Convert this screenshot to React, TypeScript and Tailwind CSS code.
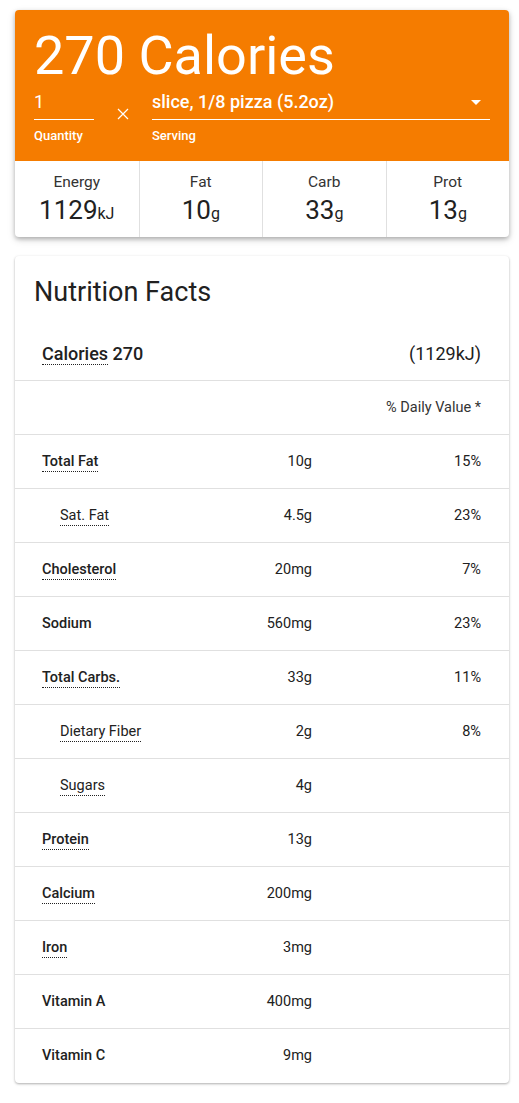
const font = { fontFamily: 'Roboto, "Liberation Sans", sans-serif' }

type Row = { name: string; amount: string; pct?: string; indent?: boolean; dotted?: boolean }

const rows: Row[] = [
  { name: 'Total Fat', amount: '10g', pct: '15%', dotted: true },
  { name: 'Sat. Fat', amount: '4.5g', pct: '23%', indent: true, dotted: true },
  { name: 'Cholesterol', amount: '20mg', pct: '7%', dotted: true },
  { name: 'Sodium', amount: '560mg', pct: '23%' },
  { name: 'Total Carbs.', amount: '33g', pct: '11%', dotted: true },
  { name: 'Dietary Fiber', amount: '2g', pct: '8%', indent: true, dotted: true },
  { name: 'Sugars', amount: '4g', indent: true, dotted: true },
  { name: 'Protein', amount: '13g', dotted: true },
  { name: 'Calcium', amount: '200mg', dotted: true },
  { name: 'Iron', amount: '3mg', dotted: true },
  { name: 'Vitamin A', amount: '400mg' },
  { name: 'Vitamin C', amount: '9mg' },
]

const stats = [
  { label: 'Energy', value: '1129', unit: 'kJ' },
  { label: 'Fat', value: '10', unit: 'g' },
  { label: 'Carb', value: '33', unit: 'g' },
  { label: 'Prot', value: '13', unit: 'g' },
]

function Summary() {
  return (
    <div className="rounded-[4px] overflow-hidden bg-white shadow-[0_2px_4px_rgba(0,0,0,0.25),0_3px_8px_rgba(0,0,0,0.12)]">
      <div className="bg-[#f57c00] text-white px-[19px] pt-[14px] pb-[17px]">
        <div className="text-[54px] leading-[64px]">270 Calories</div>
        <div className="flex items-start mt-[4px]">
          <div className="w-[60px]">
            <div className="h-[28px] text-[18px] leading-[20px] border-b border-white">1</div>
            <div className="text-[13px] font-medium leading-[16px] mt-[8px]">Quantity</div>
          </div>
          <div className="w-[58px] flex justify-center pt-[16px]">
            <svg width="12" height="12" viewBox="0 0 12 12" stroke="white" strokeWidth="1.2">
              <path d="M1 1L11 11M11 1L1 11" />
            </svg>
          </div>
          <div className="flex-1">
            <div className="h-[28px] flex items-start justify-between border-b border-white">
              <span className="text-[18px] font-medium leading-[20px]">slice, 1/8 pizza (5.2oz)</span>
              <svg width="10" height="5" viewBox="0 0 10 5" className="mr-[9px] mt-[8px]">
                <path d="M0 0H10L5 5Z" fill="white" />
              </svg>
            </div>
            <div className="text-[13px] font-medium leading-[16px] mt-[8px]">Serving</div>
          </div>
        </div>
      </div>
      <div className="grid grid-cols-4 h-[76px]">
        {stats.map((s, i) => (
          <div
            key={s.label}
            className={`flex flex-col items-center pt-[11px] ${i > 0 ? 'border-l border-[#e0e0e0]' : ''}`}
          >
            <div className="text-[15.5px] leading-[20px] text-[#333]">{s.label}</div>
            <div className="text-[#212121] leading-[32px] mt-[2px]">
              <span className="text-[26px]">{s.value}</span>
              <span className="text-[16px]">{s.unit}</span>
            </div>
          </div>
        ))}
      </div>
    </div>
  )
}

function Facts() {
  return (
    <div className="rounded-[4px] overflow-hidden bg-white shadow-[0_1px_3px_rgba(0,0,0,0.22),0_1px_2px_rgba(0,0,0,0.12)] mt-[19px] text-[#212121]">
      <div className="h-[71px] flex items-center px-[19px]">
        <div className="text-[27px] leading-[32px]">Nutrition Facts</div>
      </div>
      <div className="h-[54px] flex items-center justify-between pl-[27px] pr-[28px] border-b border-[#e0e0e0]">
        <div className="text-[18px] font-medium">
          <span className="border-b border-dotted border-[#212121] leading-[21px] inline-block">Calories</span> 270
        </div>
        <div className="text-[18px]">(1129kJ)</div>
      </div>
      <div className="h-[54px] flex items-center justify-end pl-[27px] pr-[28px] border-b border-[#e0e0e0]">
        <span className="text-[14.5px] text-[#333]">% Daily Value *</span>
      </div>
      {rows.map((r, i) => (
        <div
          key={r.name}
          className={`h-[54px] flex items-center pl-[27px] pr-[28px] text-[14.5px] ${i < rows.length - 1 ? 'border-b border-[#e0e0e0]' : ''}`}
        >
          <div className={`flex-1 ${r.indent ? 'pl-[18px]' : ''}`}>
            <span
              className={`inline-block leading-[18px] ${r.indent ? 'font-normal' : 'font-medium'} ${r.dotted ? 'border-b border-dotted border-[#212121]' : ''}`}
            >
              {r.name}
            </span>
          </div>
          <div className="w-[100px] text-right">{r.amount}</div>
          <div className="w-[169px] text-right">{r.pct ?? ''}</div>
        </div>
      ))}
    </div>
  )
}

export default function App() {
  return (
    <div className="min-h-[1103px] bg-white pl-[15px] pr-[10px] pt-[10px] pb-[20px]" style={font}>
      <Summary />
      <Facts />
    </div>
  )
}
